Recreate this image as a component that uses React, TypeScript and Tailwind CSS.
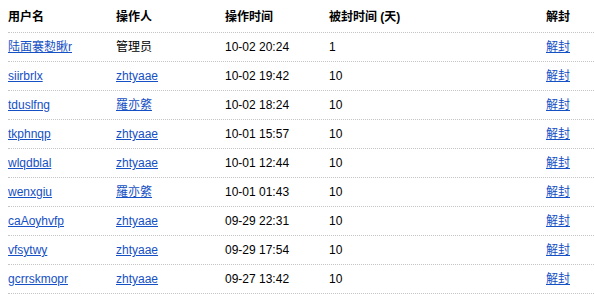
const rows = [
  { user: "陆面褰愸瞅r", op: "管理员", opLink: false, time: "10-02 20:24", days: "1" },
  { user: "siirbrlx", op: "zhtyaae", opLink: true, time: "10-02 19:42", days: "10" },
  { user: "tduslfng", op: "羅亦綮", opLink: true, time: "10-02 18:24", days: "10" },
  { user: "tkphnqp", op: "zhtyaae", opLink: true, time: "10-01 15:57", days: "10" },
  { user: "wlqdblal", op: "zhtyaae", opLink: true, time: "10-01 12:44", days: "10" },
  { user: "wenxgiu", op: "羅亦綮", opLink: true, time: "10-01 01:43", days: "10" },
  { user: "caAoyhvfp", op: "zhtyaae", opLink: true, time: "09-29 22:31", days: "10" },
  { user: "vfsytwy", op: "zhtyaae", opLink: true, time: "09-29 17:54", days: "10" },
  { user: "gcrrskmopr", op: "zhtyaae", opLink: true, time: "09-27 13:42", days: "10" },
];

const grid = "grid grid-cols-[108px_109px_104px_217px_1fr] items-center border-b border-dotted border-[#c4c4c4]";

export default function App() {
  return (
    <div
      className="w-[594px] h-[303px] bg-white pl-2 text-[12px] text-black"
      style={{ fontFamily: '"Liberation Sans", "Noto Sans CJK SC", sans-serif' }}
    >
      <div className={`${grid} h-[33px] font-bold pt-px`}>
        <div>用户名</div>
        <div>操作人</div>
        <div>操作时间</div>
        <div>被封时间 (天)</div>
        <div>解封</div>
      </div>
      {rows.map((r, i) => (
        <div key={i} className={`${grid} h-[29px]`}>
          <div>
            <a href="#" className="text-[#1550c4] underline">{r.user}</a>
          </div>
          <div>
            {r.opLink ? (
              <a href="#" className="text-[#1550c4] underline">{r.op}</a>
            ) : (
              <span>{r.op}</span>
            )}
          </div>
          <div>{r.time}</div>
          <div>{r.days}</div>
          <div>
            <a href="#" className="text-[#1550c4] underline">解封</a>
          </div>
        </div>
      ))}
    </div>
  );
}
